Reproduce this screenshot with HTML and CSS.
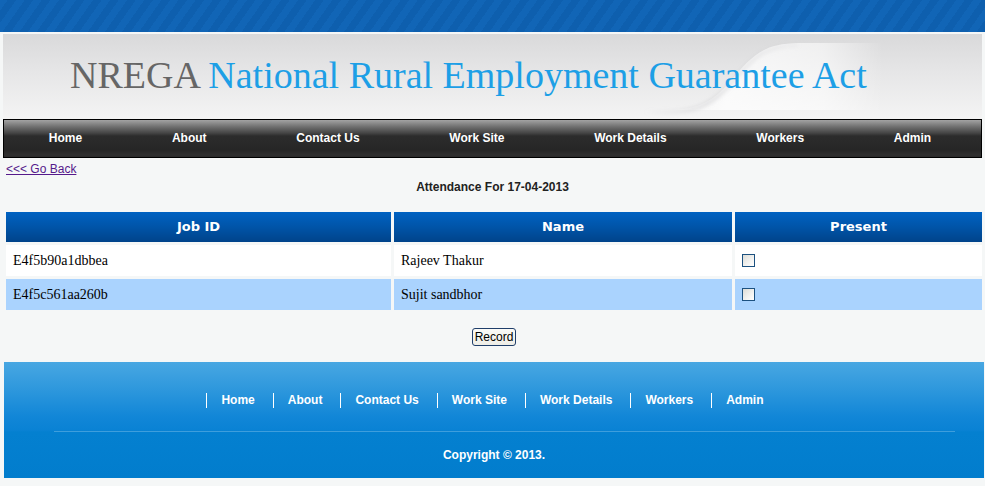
FILE: index.html
```html
<!DOCTYPE html>
<html lang="en">
<head>
<meta charset="utf-8">
<title>NREGA - Attendance</title>
<link rel="stylesheet" href="styles.css">
</head>
<body>
<div class="topbar"></div>
<div class="header">
  <svg class="swoosh" width="979" height="85" viewBox="0 0 979 85" aria-hidden="true">
    <defs>
      <linearGradient id="sw" x1="0" y1="0" x2="1" y2="0">
        <stop offset="0" stop-color="#ffffff" stop-opacity="0.0"/>
        <stop offset="0.35" stop-color="#ffffff" stop-opacity="0.75"/>
        <stop offset="0.75" stop-color="#ffffff" stop-opacity="0.55"/>
        <stop offset="1" stop-color="#ffffff" stop-opacity="0"/>
      </linearGradient>
      <linearGradient id="sh" x1="0" y1="0" x2="1" y2="0">
        <stop offset="0" stop-color="#b8b8bc" stop-opacity="0"/>
        <stop offset="0.4" stop-color="#b8b8bc" stop-opacity="0.7"/>
        <stop offset="1" stop-color="#b8b8bc" stop-opacity="0.2"/>
      </linearGradient>
      <filter id="bl" x="-10%" y="-20%" width="120%" height="140%">
        <feGaussianBlur stdDeviation="2"/>
      </filter>
    </defs>
    <path d="M640 76 C690 78 705 72 725 50 C750 20 760 10 795 9 L880 9 L880 76 Z" fill="url(#sw)"/>
    <path d="M642 78 C690 80 705 74 726 52 C750 22 762 12 795 11" fill="none" stroke="url(#sh)" stroke-width="2" filter="url(#bl)"/>
  </svg>
  <h1 class="site-title"><span class="abbr">NREGA</span> National Rural Employment Guarantee Act</h1>
</div>
<nav class="menu">
  <a href="#">Home</a>
  <a href="#">About</a>
  <a href="#">Contact Us</a>
  <a href="#">Work Site</a>
  <a href="#">Work Details</a>
  <a href="#">Workers</a>
  <a href="#">Admin</a>
</nav>
<main class="content">
  <div class="back-row"><a class="back" href="#">&lt;&lt;&lt; Go Back</a></div>
  <p class="caption">Attendance For 17-04-2013</p>
  <table class="grid">
    <colgroup>
      <col class="c1"><col class="c2"><col class="c3">
    </colgroup>
    <thead>
      <tr><th>Job ID</th><th>Name</th><th>Present</th></tr>
    </thead>
    <tbody>
      <tr><td>E4f5b90a1dbbea</td><td>Rajeev Thakur</td><td><input type="checkbox" class="chk"></td></tr>
      <tr class="alt"><td>E4f5c561aa260b</td><td>Sujit sandbhor</td><td><input type="checkbox" class="chk"></td></tr>
    </tbody>
  </table>
  <div class="actions"><button class="btn" type="button">Record</button></div>
</main>
<footer class="footer">
  <nav class="foot-menu">
    <a href="#">Home</a>
    <a href="#">About</a>
    <a href="#">Contact Us</a>
    <a href="#">Work Site</a>
    <a href="#">Work Details</a>
    <a href="#">Workers</a>
    <a href="#">Admin</a>
  </nav>
  <div class="foot-rule"></div>
  <p class="copyright">Copyright © 2013.</p>
</footer>
</body>
</html>
```

FILE: styles.css
```css
html, body {
  margin: 0;
  padding: 0;
}
body {
  background: #f5f7f7;
  font-family: "Liberation Sans", Arial, sans-serif;
  width: 985px;
  overflow: hidden;
}

.topbar {
  height: 32px;
  margin-bottom: 2px;
  background-color: #0f62b3;
  background-image: repeating-linear-gradient(-55deg,
    #0e5fae 0px, #0e5fae 7px,
    #1165b6 7px, #1165b6 14px);
}

.header {
  position: relative;
  margin: 0 3px;
  height: 85px;
  box-sizing: border-box;
  padding: 22px 0 0 67px;
  background: linear-gradient(#d9d9da 0%, #e6e6e7 45%, #f4f4f4 100%);
  overflow: hidden;
}
.swoosh {
  position: absolute;
  left: 0;
  top: 0;
}
.site-title {
  position: relative;
  margin: 0;
  font-family: "Liberation Serif", "Times New Roman", serif;
  font-weight: normal;
  font-size: 38px;
  line-height: 38px;
  color: #1d9fe6;
  white-space: nowrap;
}
.site-title .abbr {
  color: #666666;
}

.menu {
  display: flex;
  margin: 0 3px;
  height: 37px;
  padding-right: 5px;
  border: 1px solid #000;
  background: linear-gradient(#a3a3a3 0px, #6e6e6e 7px, #454545 13px, #2c2c2c 16px, #262626 30px, #303030 35px, #2a2a2a 37px);
}
.menu a {
  flex: 1 1 auto;
  text-align: center;
  line-height: 37px;
  color: #ffffff;
  font-weight: bold;
  font-size: 12px;
  text-decoration: none;
}

.content {
  display: block;
  font-size: 12px;
  line-height: 14px;
}
.back-row {
  margin: 4px 0 0 6px;
  height: 14px;
}
.back {
  font-size: 12px;
  line-height: 14px;
  color: #551a8b;
  text-decoration: underline;
}
.caption {
  margin: 4px 0 0;
  text-align: center;
  font-size: 12px;
  font-weight: bold;
  line-height: 14px;
  color: #222;
}

.grid {
  margin: 15px 0 0 3px;
  width: 982px;
  table-layout: fixed;
  border-collapse: separate;
  border-spacing: 3px;
}
.grid .c1 { width: 385px; }
.grid .c2 { width: 338px; }
.grid .c3 { width: 247px; }
.grid th {
  height: 30px;
  padding: 0;
  background: linear-gradient(#0062c2 0%, #0054a8 50%, #00438a 100%);
  color: #ffffff;
  font-family: "DejaVu Sans", Verdana, sans-serif;
  font-weight: bold;
  font-size: 13px;
  text-align: center;
}
.grid td {
  height: 31px;
  padding: 0 0 0 7px;
  background: #ffffff;
  font-family: "Liberation Serif", "Times New Roman", serif;
  font-size: 14px;
  color: #000;
  vertical-align: middle;
}
.grid tr.alt td {
  background: #aad3fe;
}
.chk {
  -webkit-appearance: none;
  appearance: none;
  display: block;
  margin: 0;
  width: 13px;
  height: 13px;
  box-sizing: border-box;
  border: 1px solid #1c5180;
  background: linear-gradient(135deg, #dcdcd7 0%, #f3f3f1 60%, #ffffff 100%);
}

.actions {
  margin-top: 15px;
  height: 18px;
  text-align: center;
  font-size: 0;
}
.btn {
  height: 18px;
  padding: 0 2px;
  margin: 0 0 0 3px;
  vertical-align: top;
  border: 1px solid #1f3e6a;
  border-radius: 3px;
  background: linear-gradient(#fbfbf8, #eeede6);
  font-family: "Liberation Sans", Arial, sans-serif;
  font-size: 12px;
  line-height: 14px;
  color: #000;
}

.footer {
  margin: 16px 1px 0 4px;
  height: 116px;
  box-sizing: border-box;
  padding-top: 31px;
  background: linear-gradient(#48a7e2 0px, #3099dd 25px, #1186d7 55px, #0a82d4 68px, #0480d0 70px, #027dcd 116px);
}
.foot-menu {
  display: flex;
  justify-content: center;
}
.foot-menu a {
  border-left: 1px solid #ffffff;
  padding: 0 18px 0 14px;
  height: 15px;
  line-height: 15px;
  color: #ffffff;
  font-size: 12px;
  font-weight: bold;
  text-decoration: none;
}
.foot-rule {
  margin: 23px 0 0 50px;
  width: 901px;
  height: 1px;
  background: #3e9edc;
}
.copyright {
  margin: 16px 0 0;
  text-align: center;
  color: #ffffff;
  font-size: 12px;
  font-weight: bold;
  line-height: 14px;
}
```
